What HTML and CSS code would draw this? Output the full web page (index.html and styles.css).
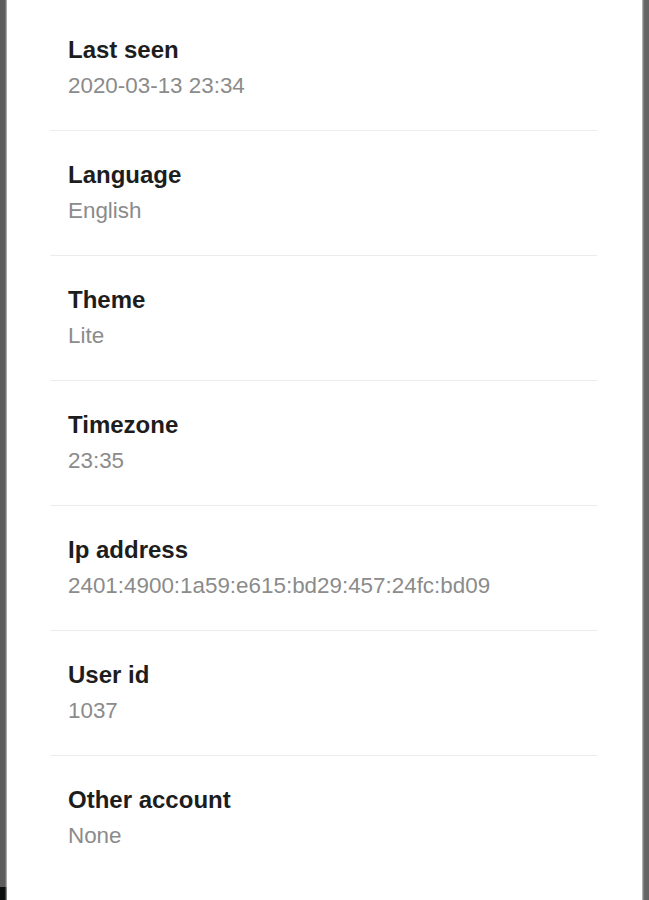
FILE: index.html
```html
<!DOCTYPE html>
<html lang="en">
<head>
<meta charset="utf-8">
<title>Account details</title>
<link rel="stylesheet" href="styles.css">
</head>
<body>
<div class="frame">
  <div class="edge edge-left"><div class="edge-foot"></div></div>
  <main class="sheet">
    <ul class="list">
      <li class="item"><div class="label">Last seen</div><div class="value">2020-03-13 23:34</div></li>
      <li class="item"><div class="label">Language</div><div class="value">English</div></li>
      <li class="item"><div class="label">Theme</div><div class="value">Lite</div></li>
      <li class="item"><div class="label">Timezone</div><div class="value">23:35</div></li>
      <li class="item"><div class="label">Ip address</div><div class="value">2401:4900:1a59:e615:bd29:457:24fc:bd09</div></li>
      <li class="item"><div class="label">User id</div><div class="value">1037</div></li>
      <li class="item"><div class="label">Other account</div><div class="value">None</div></li>
    </ul>
  </main>
  <div class="edge edge-right"></div>
</div>
</body>
</html>
```

FILE: styles.css
```css
html, body {
  margin: 0;
  padding: 0;
  height: 100%;
  background: #ffffff;
}
body {
  font-family: "Liberation Sans", Arial, Helvetica, sans-serif;
  overflow: hidden;
}
.frame {
  display: flex;
  height: 900px;
}
.edge {
  display: flex;
  flex-direction: column;
  justify-content: flex-end;
}
.edge-left {
  width: 7px;
  background: linear-gradient(to right, #5c5c5c 0, #5c5c5c 5px, #8e8e8e 6px, #c4c4c4 7px);
}
.edge-foot {
  height: 13px;
  background: linear-gradient(to right, #0b0f0d 0, #0b0f0d 5px, #6a6a6a 6px, #9a9a9a 7px);
}
.edge-right {
  width: 7px;
  background: linear-gradient(to right, #c4c4c4 0, #9c9c9c 1px, #676767 2px, #626262 7px);
}
.sheet {
  flex: 1;
  background: #ffffff;
  padding: 0 45px 0 43px;
}
.list {
  list-style: none;
  margin: 0;
  padding: 6px 0 0;
}
.item {
  height: 124px;
  box-sizing: content-box;
  padding-left: 18px;
  border-bottom: 1px solid #ececec;
  display: flex;
  flex-direction: column;
}
.item:last-child {
  border-bottom: none;
}
.label {
  margin-top: 30px;
  font-size: 24px;
  line-height: 28px;
  font-weight: 700;
  color: #1d1d1d;
}
.value {
  margin-top: 8px;
  font-size: 22.4px;
  line-height: 27px;
  color: #8b8b8b;
}
```
